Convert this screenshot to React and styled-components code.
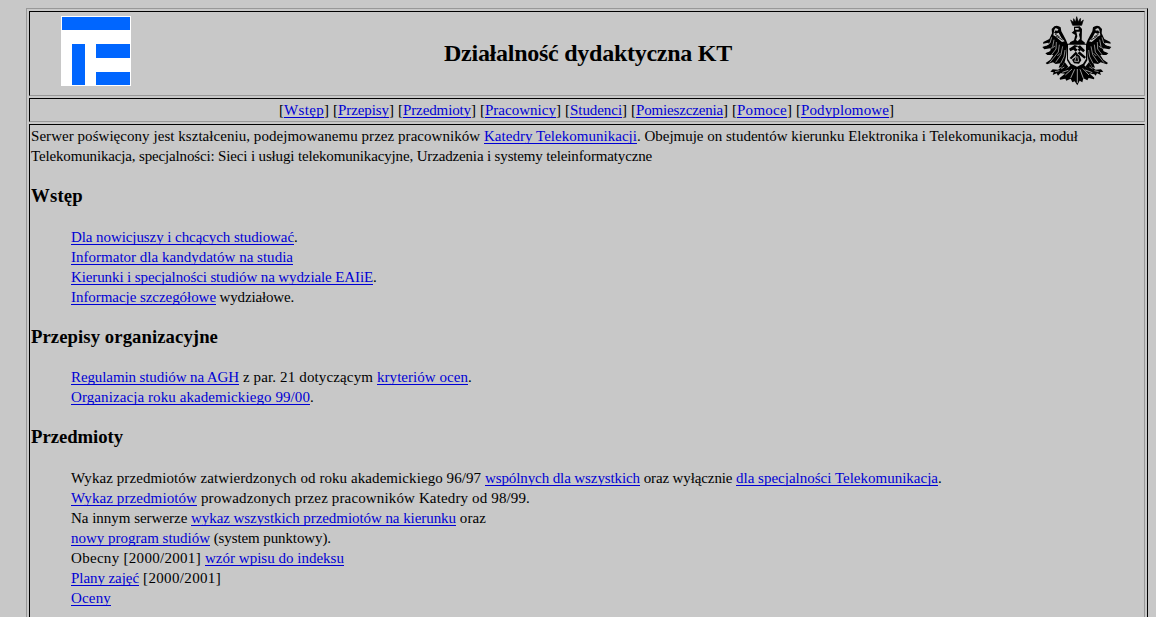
import React, { useLayoutEffect, useRef, useState } from "react";
import styled, { createGlobalStyle } from "styled-components";

const GlobalStyle = createGlobalStyle`
  body {
    margin: 0;
    background: #c8c8c8;
    color: #000;
    font: 15px/20px "Liberation Serif", "Times New Roman", serif;
    overflow: hidden;
  }
`;

const Page = styled.main`
  box-sizing: border-box;
  height: 617px;
  padding: 8px 8px 0 26px;
  overflow: hidden;
`;

const Frame = styled.div`
  display: flex;
  flex-direction: column;
  gap: 2px;
  box-sizing: border-box;
  height: 700px;
  padding: 2px;
  border: 1px solid;
  border-color: #989898 #000 #000 #989898;
`;

const Cell = styled.section`
  box-sizing: border-box;
  border: 1px solid;
  border-color: #000 #989898 #989898 #000;
`;

const Header = styled(Cell)`
  display: grid;
  grid-template-columns: 70px 1fr 70px;
  align-items: start;
  height: 85px;
  padding: 4px 32px 0 31px;
`;

const Title = styled.h1`
  margin: 0;
  padding: 23px 0 0 3px;
  font-size: 24px;
  line-height: 28px;
  text-align: center;
  white-space: nowrap;
`;

const Nav = styled(Cell)`
  display: flex;
  justify-content: center;
  gap: 4px;
  height: 24px;
  padding: 1px 1px 0 0;
`;

const NavItem = styled.span`
  display: flex;
`;

const Bracket = styled.span`
  width: 5px;
`;

const Content = styled(Cell)`
  flex: 1;
  padding: 1px;
`;

const Line = styled.div`
  height: 20px;
  white-space: pre;
`;

const Heading = styled.h3`
  margin: ${(p) => (p.$first ? "18.22px" : "17.72px")} 0 19.72px;
  font-size: 18.72px;
  line-height: 23px;
`;

const Indent = styled.div`
  padding-left: 40px;
`;

const Span = styled.span`
  white-space: pre;
`;

const Link = styled.a`
  color: #0000d4;
  text-decoration: underline;
  text-decoration-thickness: 1px;
  text-underline-offset: 2px;
  text-decoration-skip-ink: none;
  white-space: pre;
`;

/* Text tracked so that it fills the width w. */
function T({ w, link, children }) {
  const ref = useRef(null);
  const [spacing, setSpacing] = useState(0);
  useLayoutEffect(() => {
    const natural = ref.current.getBoundingClientRect().width;
    setSpacing((w - natural) / children.length);
  }, []);
  const Tag = link ? Link : Span;
  return (
    <Tag ref={ref} href={link ? "#" : undefined} style={{ letterSpacing: spacing }}>
      {children}
    </Tag>
  );
}

const Logo = () => (
  <svg width="70" height="70" viewBox="0 0 70 70" shapeRendering="crispEdges">
    <path fill="#fff" d="M0 0h70v70H0z" />
    <path fill="#0066ff" d="M1 1h68v13H1zM11 28h13v41H11zM35 28h34v14H35zM35 56h34v13H35z" />
  </svg>
);

const Wing = () => (
  <g>
    <path d="M73 79Q82 74 92 82L94 94Q99 103 108 120L112 130L108 170L104 186L94 202L86 203L91 190L77 192L69 187L51 193L47 189L61 179L70 165L52 165L46 160L61 153L61 145L43 148L37 141L56 134L55 128L39 131L40 126L58 117L66 100L65 87Z" />
    <path fill="#c8c8c8" d="M77 84L85 88L83 94L77 91L72 98L78 101L86 98L94 113L104 124L96 126L88 119L76 109L70 106L73 89Z" />
    <path fill="none" stroke="#c8c8c8" strokeWidth="2" d="M65 112L60 129L47 137M72 119L68 140L54 156M79 126L78 147L62 168M88 134L85 156L59 188M98 139L93 164L77 187M105 150L102 170L92 190M67 144L75 138M82 168L90 160" />
    <path fill="none" stroke="#000" strokeWidth="2.5" d="M75 102L89 111M81 92L90 100M78 108L98 120" />
    <path d="M104 186L95 202L84 209L68 208L61 215L71 217L68 225L80 220L84 227L91 220L102 214L115 200Z" />
    <path fill="none" stroke="#c8c8c8" strokeWidth="2" d="M75 215L88 212M93 207L103 201" />
  </g>
);

const Eagle = () => (
  <svg width="70" height="70" viewBox="36 48 210 210">
    <Wing />
    <g transform="matrix(-1 0 0 1 281 0)"><Wing /></g>
    <path stroke="#000" strokeWidth="2" d="M122 60L130 67L131 56L137 66L140 50L145 66L151 55L152 67L160 60L155 76H128Z" />
    <path d="M132 80L149 79L156 87L155 120L165 128L163 134H116L121 126L132 121L136 105L125 98L132 92Z" />
    <path fill="#c8c8c8" d="M135 84H146V89H136ZM139 95H150L147 104L150 116L143 124L138 120L142 109Z" />
    <path d="M110 131H172V181L163 196L171 205L195 218L190 223L177 219L193 233L192 238L176 234L172 241L160 235L157 247L149 242L142 256L134 244L127 247L122 236L109 242L106 236L90 239L89 234L105 221L88 219L111 205L121 197L111 181Z" />
    <path fill="#c8c8c8" d="M114 134H168V177L159 191L141 200L123 191L114 177Z" />
    <path d="M117 146L134 135L145 138L136 143L168 171L163 176L130 149L121 154ZM165 151L150 136L142 140L147 145L119 174L124 178L152 151L160 157Z" />
    <path d="M139 160L149 167L154 181L147 191L132 190L126 179L137 171Z" />
    <path fill="none" stroke="#c8c8c8" strokeWidth="2.3" d="M139 169L134 184L146 184L143 169M126 207L106 225M134 208L122 234M142 207V249M150 208L160 235M158 205L177 225M115 211L97 217M166 210L187 218" />
  </svg>
);

const nav = [
  ["Wstęp", 40],
  ["Przepisy", 51],
  ["Przedmioty", 68],
  ["Pracownicy", 71],
  ["Studenci", 52],
  ["Pomieszczenia", 87],
  ["Pomoce", 50],
  ["Podyplomowe", 88],
];

export default function App() {
  return (
    <>
      <GlobalStyle />
      <Page>
        <Frame>
          <Header>
            <Logo />
            <Title><T w={288}>Działalność dydaktyczna KT</T></Title>
            <Eagle />
          </Header>
          <Nav>
            {nav.map(([t, w]) => (
              <NavItem key={t}><Bracket>[</Bracket><T link w={w}>{t}</T><Bracket>]</Bracket></NavItem>
            ))}
          </Nav>
          <Content>
            <Line><T w={453}>{"Serwer poświęcony jest kształceniu, podejmowanemu przez pracowników "}</T><T link w={153}>Katedry Telekomunikacji</T><T w={441}>. Obejmuje on studentów kierunku Elektronika i Telekomunikacja, moduł</T></Line>
            <Line><T w={621}>Telekomunikacja, specjalności: Sieci i usługi telekomunikacyjne, Urzadzenia i systemy teleinformatyczne</T></Line>
            <Heading $first><T w={52}>Wstęp</T></Heading>
            <Indent>
              <Line><T link w={223}>Dla nowicjuszy i chcących studiować</T>.</Line>
              <Line><T link w={222}>Informator dla kandydatów na studia</T></Line>
              <Line><T link w={302}>Kierunki i specjalności studiów na wydziale EAIiE</T>.</Line>
              <Line><T link w={145}>Informacje szczegółowe</T><T w={78}> wydziałowe.</T></Line>
            </Indent>
            <Heading><T w={187}>Przepisy organizacyjne</T></Heading>
            <Indent>
              <Line><T link w={168}>Regulamin studiów na AGH</T><T w={138}>{" z par. 21 dotyczącym "}</T><T link w={91}>kryteriów ocen</T>.</Line>
              <Line><T link w={239}>Organizacja roku akademickiego 99/00</T>.</Line>
            </Indent>
            <Heading><T w={92}>Przedmioty</T></Heading>
            <Indent>
              <Line><T w={414}>{"Wykaz przedmiotów zatwierdzonych od roku akademickiego 96/97 "}</T><T link w={155}>wspólnych dla wszystkich</T><T w={96}>{" oraz wyłącznie "}</T><T link w={202}>dla specjalności Telekomunikacja</T>.</Line>
              <Line><T link w={126}>Wykaz przedmiotów</T><T w={333}> prowadzonych przez pracowników Katedry od 98/99.</T></Line>
              <Line><T w={120}>{"Na innym serwerze "}</T><T link w={265}>wykaz wszystkich przedmiotów na kierunku</T><T w={30}> oraz</T></Line>
              <Line><T link w={139}>nowy program studiów</T><T w={121}> (system punktowy).</T></Line>
              <Line><T w={134}>{"Obecny [2000/2001] "}</T><T link w={139}>wzór wpisu do indeksu</T></Line>
              <Line><T link w={68}>Plany zajęć</T><T w={82}> [2000/2001]</T></Line>
              <Line><T link w={40}>Oceny</T></Line>
            </Indent>
          </Content>
        </Frame>
      </Page>
    </>
  );
}
